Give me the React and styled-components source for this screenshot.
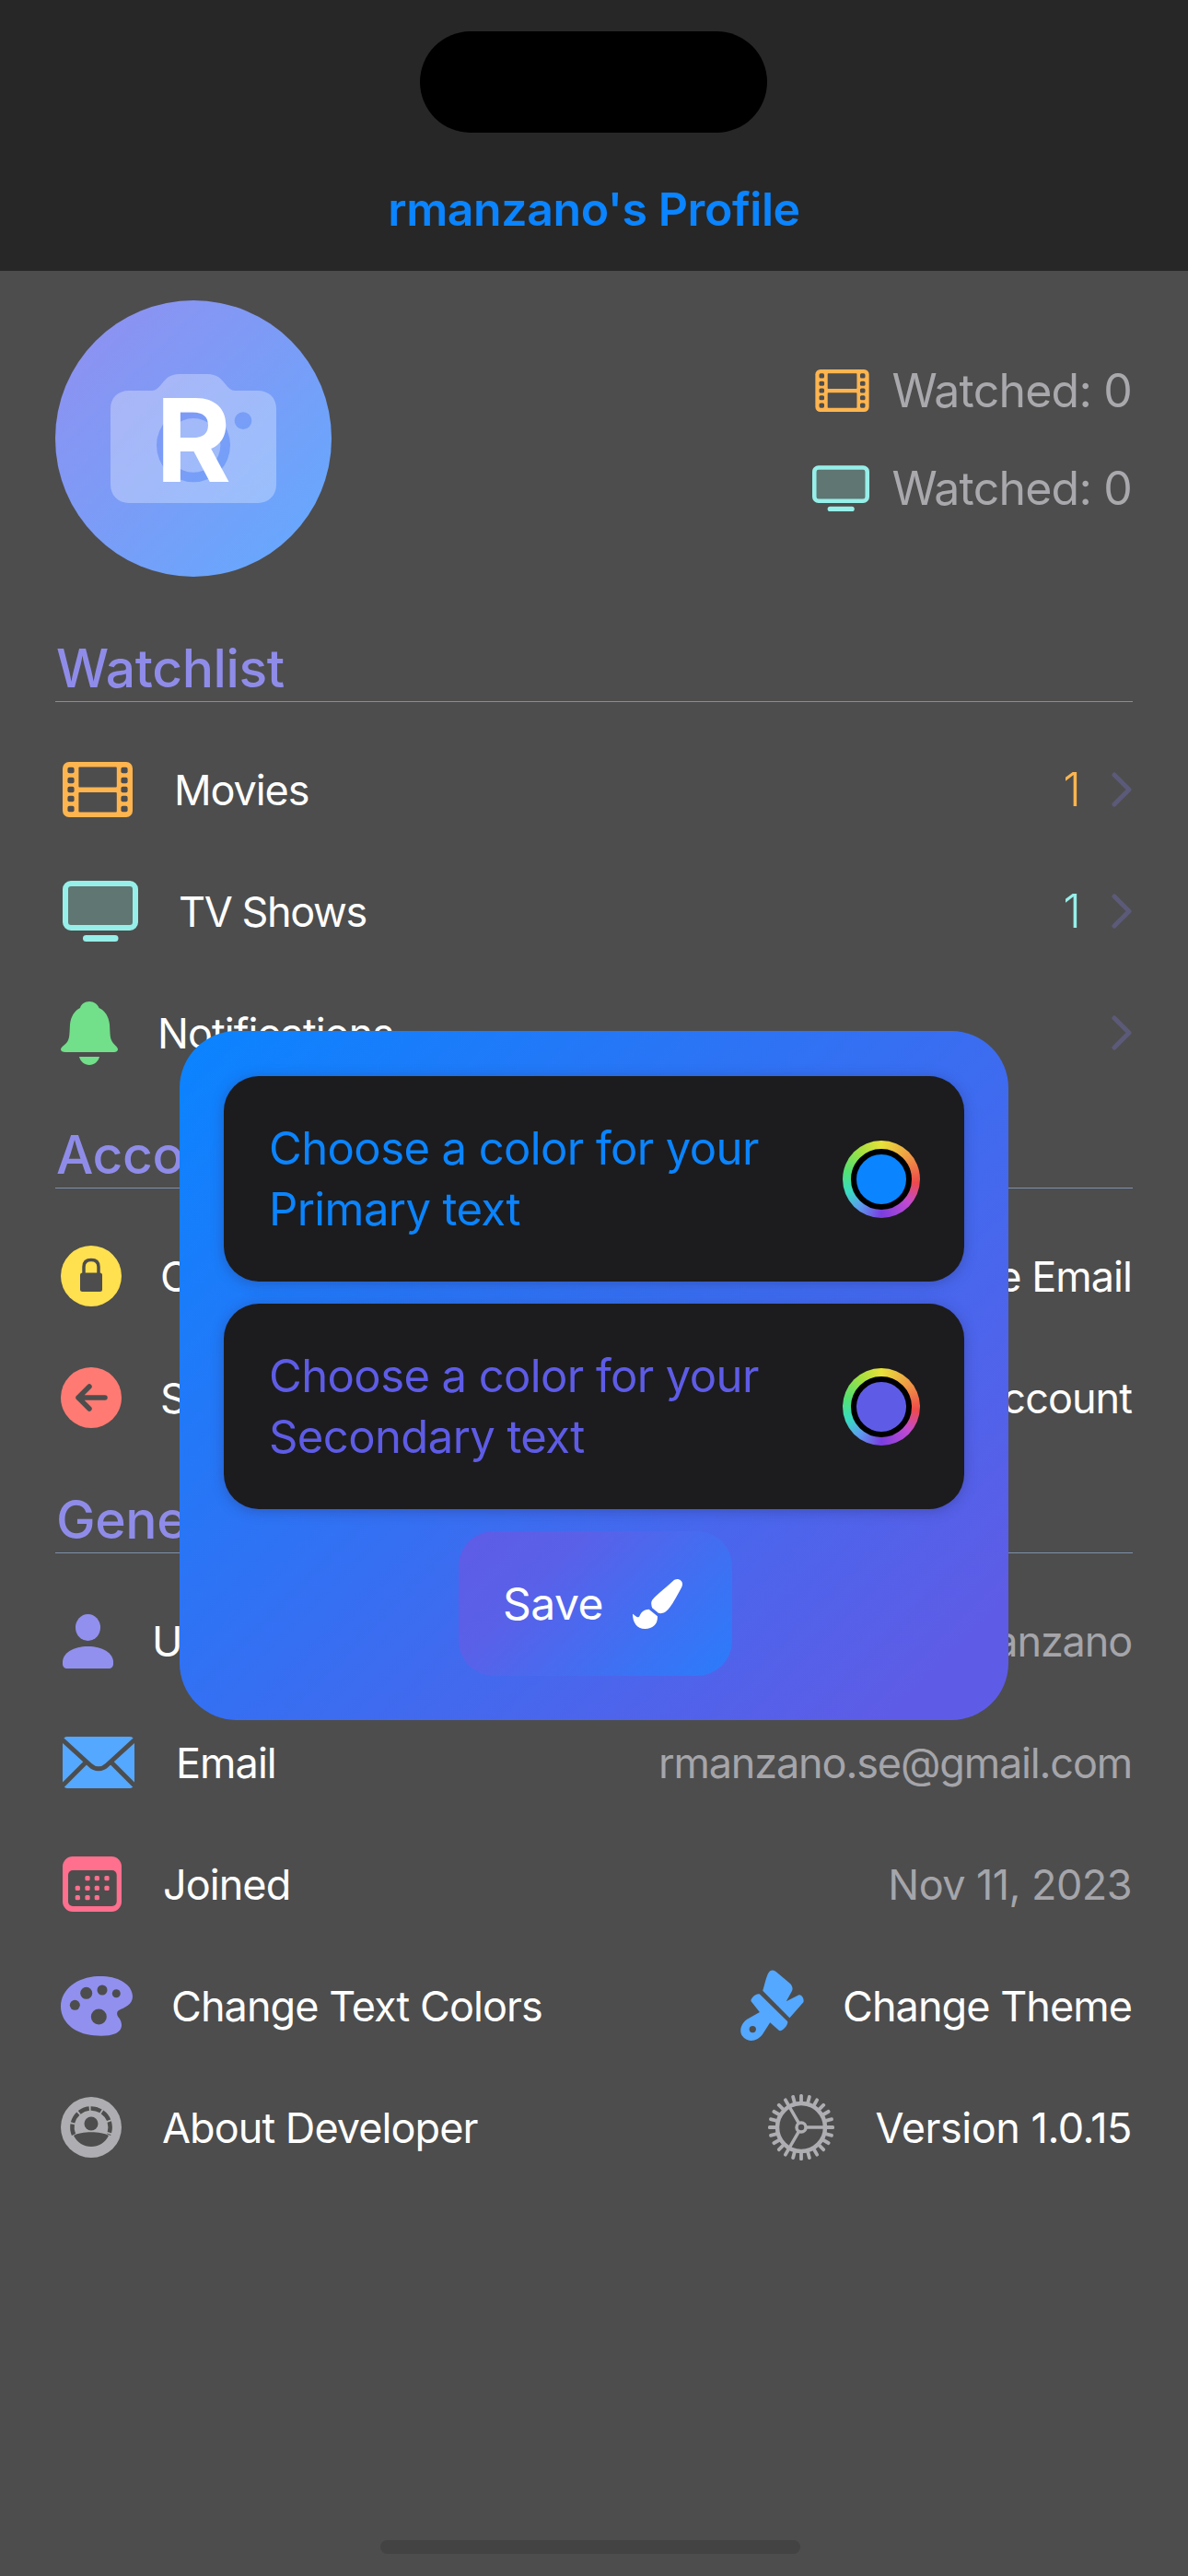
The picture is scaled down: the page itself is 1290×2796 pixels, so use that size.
import React from 'react';
import styled, { createGlobalStyle } from 'styled-components';
import { FaPaintBrush } from 'react-icons/fa';

const BG = '#4d4d4d';
const FONT = '"Inter", "Liberation Sans", sans-serif';

const Global = createGlobalStyle`
  html, body { margin: 0; padding: 0; background: ${BG}; }
  * { box-sizing: border-box; }
`;

const Page = styled.div`
  position: relative;
  width: 1290px;
  height: 2796px;
  overflow: hidden;
  display: flex;
  flex-direction: column;
  background: ${BG};
  font-family: ${FONT};
  color: #fff;
`;

const Header = styled.header`
  position: relative;
  flex: none;
  height: 294px;
  padding-bottom: 37px;
  display: flex;
  align-items: flex-end;
  justify-content: center;
  background: #272727;
`;

const Notch = styled.div`
  position: absolute;
  left: 456px;
  top: 34px;
  width: 377px;
  height: 110px;
  border-radius: 55px;
  background: #000;
`;

const Title = styled.h1`
  margin: 0;
  font-size: 50px;
  line-height: 60px;
  font-weight: 600;
  letter-spacing: -0.4px;
  color: #0a84ff;
`;

const Profile = styled.section`
  flex: none;
  padding: 32px 61px 0 60px;
  display: flex;
  align-items: center;
  justify-content: space-between;
`;

const Avatar = styled.div`
  position: relative;
  width: 300px;
  height: 300px;
  border-radius: 50%;
  display: flex;
  align-items: center;
  justify-content: center;
  background: linear-gradient(135deg, #928fef 0%, #62aaff 100%);
`;

const CameraMark = styled.svg`
  position: absolute;
  left: 60px;
  top: 80px;
  width: 180px;
  height: 140px;
`;

const Initial = styled.span`
  position: relative;
  padding-top: 3px;
  font-size: 125px;
  line-height: 1;
  font-weight: 700;
  color: #fff;
`;

const Stats = styled.div`
  display: flex;
  flex-direction: column;
  align-items: flex-end;
  gap: 46px;
  padding-top: 2px;
`;

const Stat = styled.div`
  display: flex;
  align-items: center;
  gap: 24px;
  height: 60px;
  font-size: 50px;
  letter-spacing: -0.8px;
  color: #a9a9ad;
`;

const SectionHead = styled.h2`
  margin: ${p => (p.$first ? '34px' : '0')} 60px 0;
  height: ${p => (p.$first ? '102px' : '103px')};
  padding: 0 0 2px 1px;
  display: flex;
  align-items: flex-end;
  font-size: 57px;
  line-height: 66px;
  font-weight: 500;
  letter-spacing: -0.4px;
  color: #8f8ce9;
  border-bottom: 1.5px solid #7c90ac;
`;

const Rows = styled.div`
  padding-top: 29px;
`;

const Row = styled.div`
  height: 132px;
  padding: 0 61px 0 66px;
  display: flex;
  align-items: center;
  justify-content: space-between;
`;

const Side = styled.div`
  display: flex;
  align-items: center;
  gap: ${p => p.$gap || 42}px;
`;

const Glyph = styled.svg`
  flex: none;
  display: block;
  margin-left: ${p => p.$ml ?? 2}px;
`;

const Label = styled.span`
  padding-top: 1px;
  font-size: 45px;
  line-height: 56px;
  letter-spacing: ${p => p.$track ?? -0.95}px;
  color: #fff;
  white-space: nowrap;
`;

const Value = styled(Label)`
  letter-spacing: ${p => p.$track ?? -1.15}px;
  color: #a5a5aa;
`;

const Count = styled.span`
  font-size: 50px;
  line-height: 56px;
  font-weight: 300;
  color: ${p => p.$color};
`;

const Trailing = styled.div`
  display: flex;
  align-items: center;
  gap: 33px;
`;

const Chevron = styled.svg`
  display: block;
  width: 22px;
  height: 38px;
`;

const HomeBar = styled.div`
  flex: none;
  align-self: flex-start;
  width: 456px;
  height: 15px;
  margin: auto 0 24px 413px;
  border-radius: 8px;
  background: #434343;
`;

const Modal = styled.div`
  position: absolute;
  left: 195px;
  top: 1119px;
  width: 900px;
  height: 748px;
  padding: 49px 48px 48px;
  display: flex;
  flex-direction: column;
  gap: 24px;
  border-radius: 62px;
  background: linear-gradient(135deg, #0a84ff 0%, #5e5ce6 92%);
`;

const ColorCard = styled.div`
  flex: none;
  height: 223px;
  padding: 0 48px 0 49px;
  display: flex;
  align-items: center;
  justify-content: space-between;
  border-radius: 38px;
  background: #1c1c1e;
  box-shadow: 0 2px 14px rgba(40, 40, 90, 0.35);
`;

const CardText = styled.div`
  width: 580px;
  font-size: 49px;
  line-height: 66px;
  letter-spacing: -0.6px;
  color: ${p => p.$color};
`;

const Swatch = styled.div`
  flex: none;
  width: 84px;
  height: 84px;
  padding: 9px;
  border-radius: 50%;
  background: conic-gradient(#e8e23a 0deg, #ef9a45 50deg, #ee4a4a 95deg, #c24ad0 130deg, #7a3ee0 180deg, #5aa0ee 220deg, #38dcc0 250deg, #55e070 285deg, #a6e040 325deg, #e8e23a 360deg);
`;

const SwatchCore = styled.div`
  width: 66px;
  height: 66px;
  border-radius: 50%;
  border: 6px solid #000;
  background: ${p => p.$color};
`;

const SaveButton = styled.button`
  flex: none;
  align-self: center;
  width: 297px;
  height: 157px;
  margin-left: 2px;
  padding: 0 5px 0 0;
  display: flex;
  align-items: center;
  justify-content: center;
  gap: 32px;
  border: 0;
  border-radius: 38px;
  background: linear-gradient(135deg, #5e5ce6 0%, #5a60e8 30%, #2a7cfb 100%);
  font-family: ${FONT};
  font-size: 48px;
  letter-spacing: -0.5px;
  color: #fff;
`;

const Film = ({ w = 76, h = 60, ml }) => (
  <Glyph $ml={ml} width={w} height={h} viewBox="0 0 76 60">
    <rect width="76" height="60" rx="7" fill="#ffb54f" />
    {[9, 20, 30, 40, 51].map(y => (
      <g key={y} fill={BG}>
        <rect x="5.4" y={y - 3.3} width="7.2" height="6.6" rx="2" />
        <rect x="63.4" y={y - 3.3} width="7.2" height="6.6" rx="2" />
      </g>
    ))}
    <rect x="17.4" y="5.5" width="41.4" height="22" rx="1" fill={BG} />
    <rect x="17.4" y="33" width="41.4" height="21.5" rx="1" fill={BG} />
  </Glyph>
);

const Tv = ({ w = 82, h = 67, ml }) => (
  <Glyph $ml={ml} width={w} height={h} viewBox="0 0 82 67">
    <rect x="3" y="3" width="76" height="48" rx="6" fill="#5f7672" stroke="#96efe9" strokeWidth="6" />
    <rect x="22" y="59" width="38.500" height="7" rx="3.5" fill="#96efe9" />
  </Glyph>
);

const Bell = () => (
  <Glyph $ml={0} width="63" height="69" viewBox="0 0 63 69" fill="#72df8a">
    <path d="M31 0C36 0 40 3 41.500 7C48 10 52 16 53 25C53.500 34 53.500 39 55 42C57 47 62 49 62 52C62 54 60 55 58 55H5C2 55 0 54 0 52C0 49 6 47 8 42C9.500 39 9.500 34 10 25C11 16 15 10 21 7C22 3 26 0 31 0Z" />
    <path d="M20 60H42C41 65 36 69 31 69C26 69 21 65 20 60Z" />
  </Glyph>
);

const Lock = () => (
  <Glyph $ml={0} width="66" height="66" viewBox="0 0 66 66">
    <circle cx="33" cy="33" r="33" fill="#ffe04f" />
    <rect x="21" y="29.500" width="24" height="20.500" rx="2.500" fill={BG} />
    <path d="M25 31V23C25 18 28 15.500 33 15.500C38 15.500 41 18 41 23V31" fill="none" stroke={BG} strokeWidth="3.500" />
  </Glyph>
);

const BackArrow = () => (
  <Glyph $ml={0} width="66" height="66" viewBox="0 0 66 66">
    <circle cx="33" cy="33" r="33" fill="#ff7a72" />
    <path d="M19 33H48M31 21L19 33L31 45" fill="none" stroke={BG} strokeWidth="5.500" strokeLinecap="round" strokeLinejoin="round" />
  </Glyph>
);

const Person = () => (
  <Glyph width="55" height="59" viewBox="0 0 55 59" fill="#9190ef">
    <ellipse cx="27.500" cy="14.500" rx="13.500" ry="14.500" />
    <path d="M0 52C0 42 12 35 27.500 35C43 35 55 42 55 52V54C55 57 53 59 50 59H5C2 59 0 57 0 54Z" />
  </Glyph>
);

const Mail = () => (
  <Glyph width="78" height="56" viewBox="0 0 78 56">
    <rect width="78" height="56" rx="5" fill="#54a8ff" />
    <path d="M-3 1L30 31C35 36 43 36 48 31L81 1M26 27L-3 56M52 27L81 56" fill="none" stroke={BG} strokeWidth="5" />
  </Glyph>
);

const Calendar = () => {
  const cols = [16.3, 27, 37.3, 48];
  const rows = [[23.7, [1, 2, 3]], [34.3, [0, 1, 2, 3]], [44.7, [0, 1, 2]]];
  return (
    <Glyph width="64" height="60" viewBox="0 0 64 60">
      <rect width="64" height="60" rx="11" fill="#ff6f8e" />
      <rect x="6" y="15" width="52.700" height="39" rx="5" fill={BG} />
      {rows.map(([y, cs]) =>
        cs.map(c => <rect key={`${y}-${c}`} x={cols[c] - 2.6} y={y - 2.6} width="5.200" height="5.200" rx="1.500" fill="#ff6f8e" />)
      )}
    </Glyph>
  );
};

const Palette = () => (
  <Glyph $ml={0} width="78" height="65" viewBox="0 0 78 65">
    <path fill="#9190ef" d="M40 0C62 -1 78 9 78 22C78 31 69 34 63 37C60 39 61 43 63 45C67 50 68 58 60 62C50 66 38 65 28 63C10 59 0 46 0 33C0 14 18 1 40 0Z" />
    <g fill={BG}>
      <circle cx="27.700" cy="18.300" r="6.500" />
      <circle cx="45" cy="15" r="5.500" />
      <circle cx="60.300" cy="18.700" r="4.500" />
      <circle cx="15.300" cy="31.300" r="5.500" />
      <circle cx="41.300" cy="44" r="8.500" />
    </g>
  </Glyph>
);

const ThemeBrush = () => (
  <Glyph $ml={0} width="69" height="78" viewBox="72 55 208 232">
    <path fill="#54a8ff" d="M165 62C172 52 182 54 190 61L234 98C242 106 245 115 240 124L222 157L262 136C272 132 282 148 278 160L233 211L145 122C152 102 155 78 165 62Z" />
    <path fill="#54a8ff" d="M107 157C103 148 125 128 136 134L226 222C231 232 208 258 198 252L169 226L146 262C130 287 95 295 78 270C65 250 78 226 95 215L135 192Z" />
    <circle cx="112" cy="248" r="11" fill={BG} />
  </Glyph>
);

const About = () => (
  <Glyph $ml={0} width="66" height="66" viewBox="0 0 66 66">
    <circle cx="33" cy="33" r="33" fill="#aeaeb2" />
    <circle cx="33" cy="29" r="7.500" fill={BG} />
    <path d="M14 41A20.500 20.500 0 0 1 33 12.500A20.500 20.500 0 0 1 52 41" fill="none" stroke={BG} strokeWidth="4.500" strokeDasharray="11.500 1.800" />
    <path d="M14 42C22 37 44 37 52 42C48 50 41 54 33 54C25 54 18 50 14 42Z" fill={BG} />
  </Glyph>
);

const Gear = () => (
  <Glyph $ml={0} width="72" height="72" viewBox="-36 -36 72 72" fill="none" stroke="#aeaeb2">
    {Array.from({ length: 24 }, (_, i) => (
      <rect key={i} x="-1.900" y="-36" width="3.800" height="10" rx="1.500" fill="#aeaeb2" stroke="none" transform={`rotate(${i * 15})`} />
    ))}
    <circle r="26" strokeWidth="4.500" />
    <circle r="5" strokeWidth="3.500" />
    <path d="M5 0H26M-2.500 -4.300L-13 -22.500M-2.500 4.300L-13 22.500" strokeWidth="3.500" />
  </Glyph>
);

const Caret = () => (
  <Chevron viewBox="0 0 22 38" fill="none" stroke="#5b5a78" strokeWidth="5" strokeLinecap="round" strokeLinejoin="round">
    <path d="M3 3L19 19L3 35" />
  </Chevron>
);

export default function App() {
  return (
    <Page>
      <Global />
      <Header>
        <Notch />
        <Title>rmanzano's Profile</Title>
      </Header>

      <Profile>
        <Avatar>
          <CameraMark viewBox="240 318 540 420">
            <path
              fill="#fff"
              fillOpacity="0.3"
              fillRule="evenodd"
              d="M300 372H375C388 372 395 364 405 352C420 333 432 318 465 318H555C588 318 600 333 615 352C625 364 632 372 645 372H720C755 372 780 395 780 430V678C780 713 755 738 720 738H300C265 738 240 713 240 678V430C240 395 265 372 300 372ZM510 430A120 120 0 1 0 510 670A120 120 0 1 0 510 430ZM510 462A88 88 0 1 1 510 638A88 88 0 1 1 510 462ZM672 442A28 28 0 1 0 672 498A28 28 0 1 0 672 442Z"
            />
          </CameraMark>
          <Initial>R</Initial>
        </Avatar>
        <Stats>
          <Stat>
            <Film w={59} h={46} ml={0} />
            <span>Watched: 0</span>
          </Stat>
          <Stat>
            <Tv w={62} h={51} ml={0} />
            <span>Watched: 0</span>
          </Stat>
        </Stats>
      </Profile>

      <SectionHead $first>Watchlist</SectionHead>
      <Rows>
        <Row>
          <Side $gap={45}><Film /><Label $track={-1.1}>Movies</Label></Side>
          <Trailing><Count $color="#ffb54f">1</Count><Caret /></Trailing>
        </Row>
        <Row>
          <Side $gap={44}><Tv /><Label $track={-1.4}>TV Shows</Label></Side>
          <Trailing><Count $color="#96efe9">1</Count><Caret /></Trailing>
        </Row>
        <Row>
          <Side><Bell /><Label>Notifications</Label></Side>
          <Caret />
        </Row>
      </Rows>

      <SectionHead>Account</SectionHead>
      <Rows>
        <Row>
          <Side><Lock /><Label>Change Password</Label></Side>
          <Label>Change Email</Label>
        </Row>
        <Row>
          <Side><BackArrow /><Label>Sign Out</Label></Side>
          <Label>Delete Account</Label>
        </Row>
      </Rows>

      <SectionHead>General</SectionHead>
      <Rows>
        <Row>
          <Side><Person /><Label>Username</Label></Side>
          <Value>rmanzano</Value>
        </Row>
        <Row>
          <Side $gap={45}><Mail /><Label>Email</Label></Side>
          <Value>rmanzano.se@gmail.com</Value>
        </Row>
        <Row>
          <Side $gap={45}><Calendar /><Label>Joined</Label></Side>
          <Value $track={-0.55}>Nov 11, 2023</Value>
        </Row>
        <Row>
          <Side $gap={42}><Palette /><Label>Change Text Colors</Label></Side>
          <Side><ThemeBrush /><Label>Change Theme</Label></Side>
        </Row>
        <Row>
          <Side $gap={44}><About /><Label>About Developer</Label></Side>
          <Side $gap={44}><Gear /><Label $track={-0.45}>Version 1.0.15</Label></Side>
        </Row>
      </Rows>

      <HomeBar />

      <Modal>
        <ColorCard>
          <CardText $color="#0a84ff">Choose a color for your Primary text</CardText>
          <Swatch><SwatchCore $color="#0a84ff" /></Swatch>
        </ColorCard>
        <ColorCard>
          <CardText $color="#5e5ce6">Choose a color for your Secondary text</CardText>
          <Swatch><SwatchCore $color="#5e5ce6" /></Swatch>
        </ColorCard>
        <SaveButton>
          Save
          <FaPaintBrush size={54} color="#fff" />
        </SaveButton>
      </Modal>
    </Page>
  );
}
